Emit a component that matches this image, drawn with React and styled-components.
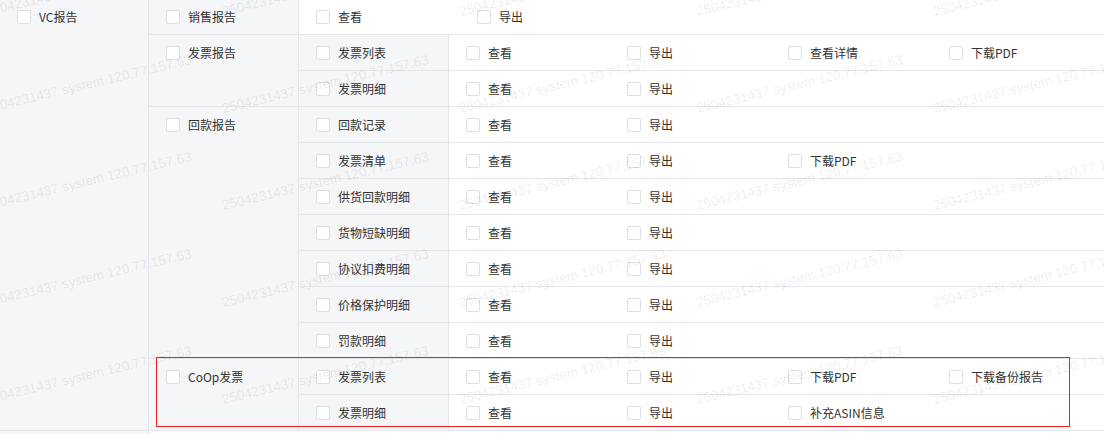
import React from "react";
import styled, { createGlobalStyle } from "styled-components";

const GlobalStyle = createGlobalStyle`
  html, body { margin: 0; padding: 0; background: #fff; }
  body { font-family: "Noto Sans CJK SC", "Noto Sans", sans-serif; overflow: hidden; }
`;

const GRAY = "#f5f6f8";
const LINE = "#e4e6eb";

const Page = styled.div`
  position: relative;
  width: 1104px;
  height: 434px;
  overflow: hidden;
`;

const Table = styled.div`
  margin-top: -1px;
  display: flex;
  flex-direction: column;
  font-size: 12px;
  color: #333;
`;

const L1Row = styled.div`
  display: flex;
  border-bottom: 1px solid ${LINE};
`;

const L1Cell = styled.div`
  width: 148px;
  flex: none;
  background: ${GRAY};
  border-right: 1px solid ${LINE};
`;

const Body = styled.div`
  flex: 1;
  display: flex;
  flex-direction: column;
  min-width: 0;
`;

const L2Row = styled.div`
  display: flex;
  border-bottom: ${(p) => (p.$last ? "none" : `1px solid ${LINE}`)};
`;

const SideCell = styled.div`
  width: 149px;
  flex: none;
  background: ${GRAY};
  border-right: 1px solid ${LINE};
`;

const L3Row = styled.div`
  display: flex;
  border-bottom: ${(p) => (p.$last ? "none" : `1px solid ${LINE}`)};
`;

const Head = styled.div`
  height: 35px;
  display: flex;
  align-items: center;
  padding-left: 17px;
  box-sizing: border-box;
`;

const Actions = styled.div`
  flex: 1;
  height: 35px;
  display: flex;
  background: #fff;
`;

const Action = styled.div`
  width: 161px;
  flex: none;
  display: flex;
  align-items: center;
  padding-left: 17px;
  box-sizing: border-box;
`;

const Box = styled.span`
  width: 14px;
  height: 14px;
  flex: none;
  box-sizing: border-box;
  border: 1px solid #dcdfe6;
  border-radius: 2px;
  background: #fff;
  margin-right: 8px;
`;

const Label = styled.span`
  line-height: 1;
  white-space: nowrap;
`;

const Overlay = styled.div`
  position: absolute;
  inset: 0;
  pointer-events: none;
  overflow: hidden;
`;

const Mark = styled.span`
  position: absolute;
  font-family: "Liberation Sans", Arial, sans-serif;
  font-size: 13.5px;
  line-height: 1;
  white-space: nowrap;
  color: rgba(0, 0, 0, 0.085);
  transform-origin: 0 100%;
  transform: rotate(-13.5deg);
`;

const Highlight = styled.div`
  position: absolute;
  left: 156px;
  top: 357px;
  width: 914px;
  height: 70px;
  box-sizing: border-box;
  border: 1px solid #ec1c24;
  pointer-events: none;
`;

const Check = ({ children }) => (
  <>
    <Box />
    <Label>{children}</Label>
  </>
);

const data = [
  {
    name: "VC报告",
    children: [
      { name: "销售报告", actions: ["查看", "导出"] },
      {
        name: "发票报告",
        children: [
          { name: "发票列表", actions: ["查看", "导出", "查看详情", "下载PDF"] },
          { name: "发票明细", actions: ["查看", "导出"] },
        ],
      },
      {
        name: "回款报告",
        children: [
          { name: "回款记录", actions: ["查看", "导出"] },
          { name: "发票清单", actions: ["查看", "导出", "下载PDF"] },
          { name: "供货回款明细", actions: ["查看", "导出"] },
          { name: "货物短缺明细", actions: ["查看", "导出"] },
          { name: "协议扣费明细", actions: ["查看", "导出"] },
          { name: "价格保护明细", actions: ["查看", "导出"] },
          { name: "罚款明细", actions: ["查看", "导出"] },
        ],
      },
      {
        name: "CoOp发票",
        children: [
          { name: "发票列表", actions: ["查看", "导出", "下载PDF", "下载备份报告"] },
          { name: "发票明细", actions: ["查看", "导出", "补充ASIN信息"] },
        ],
      },
    ],
  },
];

const ActionList = ({ items }) => (
  <Actions>
    {items.map((a, i) => (
      <Action key={i}>
        <Check>{a}</Check>
      </Action>
    ))}
  </Actions>
);

const marks = [];
for (let j = 0; j < 6; j++) {
  for (let i = 0; i < 6; i++) {
    marks.push({ x: -13 + i * 237, y: 18 + j * 97 - 97 });
  }
}

export default function App() {
  return (
    <Page>
      <GlobalStyle />
      <Table>
        {data.map((l1, a) => (
          <L1Row key={a}>
            <L1Cell>
              <Head>
                <Check>{l1.name}</Check>
              </Head>
            </L1Cell>
            <Body>
              {l1.children.map((l2, b) => (
                <L2Row key={b} $last={b === l1.children.length - 1}>
                  <SideCell>
                    <Head>
                      <Check>{l2.name}</Check>
                    </Head>
                  </SideCell>
                  {l2.actions ? (
                    <ActionList items={l2.actions} />
                  ) : (
                    <Body>
                      {l2.children.map((l3, c) => (
                        <L3Row key={c} $last={c === l2.children.length - 1}>
                          <SideCell>
                            <Head>
                              <Check>{l3.name}</Check>
                            </Head>
                          </SideCell>
                          <ActionList items={l3.actions} />
                        </L3Row>
                      ))}
                    </Body>
                  )}
                </L2Row>
              ))}
            </Body>
          </L1Row>
        ))}
        <L1Row>
          <L1Cell>
            <Head />
          </L1Cell>
          <Body>
            <Actions />
          </Body>
        </L1Row>
      </Table>
      <Overlay>
        {marks.map((m, i) => (
          <Mark key={i} style={{ left: m.x, top: m.y - 13 }}>
            2504231437 system 120.77.157.63
          </Mark>
        ))}
      </Overlay>
      <Highlight />
    </Page>
  );
}
